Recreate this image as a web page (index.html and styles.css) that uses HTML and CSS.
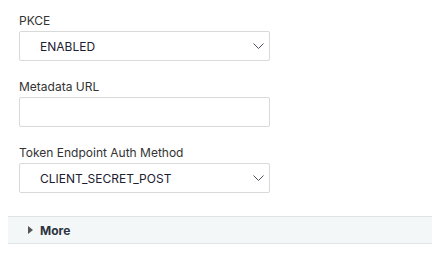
FILE: index.html
```html
<!DOCTYPE html>
<html lang="en">
<head>
<meta charset="utf-8">
<title>Client settings</title>
<link rel="stylesheet" href="styles.css">
</head>
<body>
  <section class="fields">
    <div class="field">
      <label class="label">PKCE</label>
      <div class="select">
        <span class="value">ENABLED</span>
        <svg class="chevron" width="11" height="6" viewBox="0 0 11 6"><path d="M0.5 0.5 L5.5 5.5 L10.5 0.5" fill="none" stroke="#4a5260" stroke-width="1"/></svg>
      </div>
    </div>
    <div class="field">
      <label class="label">Metadata URL</label>
      <div class="input"></div>
    </div>
    <div class="field">
      <label class="label">Token Endpoint Auth Method</label>
      <div class="select">
        <span class="value">CLIENT_SECRET_POST</span>
        <svg class="chevron" width="11" height="6" viewBox="0 0 11 6"><path d="M0.5 0.5 L5.5 5.5 L10.5 0.5" fill="none" stroke="#4a5260" stroke-width="1"/></svg>
      </div>
    </div>
  </section>
  <div class="more">
    <span class="caret"></span>
    <span class="more-text">More</span>
  </div>
</body>
</html>
```

FILE: styles.css
```css
body {
	margin: 0;
	padding: 0 0 0 8px;
	font-family: Inter, "Noto Sans", sans-serif;
	font-size: 12px;
	background: #fff;
}
.fields {
	display: flex;
	flex-direction: column;
	gap: 18px;
	padding: 13px 0 0 11px;
}
.field {
	display: flex;
	flex-direction: column;
}
.label {
	color: #333;
	font-size: 12px;
	line-height: 16px;
	margin-bottom: 2px;
}
.select, .input {
	box-sizing: border-box;
	width: 251px;
	height: 30px;
	border: 1px solid #d9d9d9;
	border-radius: 2px;
	background: #fff;
}
.select {
	display: flex;
	align-items: center;
	justify-content: space-between;
	padding: 0 5px 0 20px;
}
.value {
	color: #1d2030;
	font-size: 12px;
}
.more {
	box-sizing: border-box;
	height: 28px;
	margin-top: 23px;
	background: #f4f7f8;
	border-top: 1px solid #e1e4e6;
	border-bottom: 1px solid #e1e4e6;
	display: flex;
	align-items: center;
	padding-left: 20px;
}
.caret {
	width: 0;
	height: 0;
	border-top: 4px solid transparent;
	border-bottom: 4px solid transparent;
	border-left: 5px solid #555;
	margin-right: 7px;
}
.more-text {
	font-weight: 700;
	color: #2b3340;
	font-size: 12px;
}
```
